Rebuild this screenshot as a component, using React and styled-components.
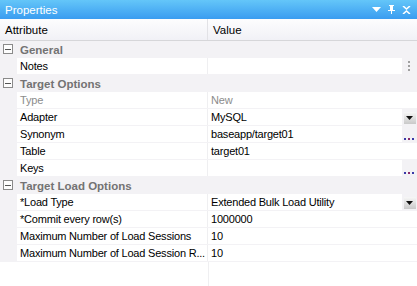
import React from "react";
import styled, { createGlobalStyle } from "styled-components";

const Global = createGlobalStyle`
  html, body { margin: 0; padding: 0; background: #fff; }
  body { font-family: "Liberation Sans", Arial, sans-serif; font-size: 11px; }
`;

const Panel = styled.div`
  width: 417px;
  height: 286px;
  display: flex;
  flex-direction: column;
  background: #fff;
  overflow: hidden;
`;

const TitleBar = styled.div`
  height: 19px;
  flex: none;
  display: flex;
  align-items: center;
  justify-content: space-between;
  padding: 0 6px 0 5px;
  background: linear-gradient(#64c6f9, #3a9cf0);
  color: #fff;
  font-size: 11.5px;
`;

const TitleIcons = styled.div`
  display: flex;
  align-items: center;
  gap: 6px;
`;

const Header = styled.div`
  height: 21px;
  flex: none;
  display: flex;
  align-items: center;
  background: linear-gradient(#fdfdfe, #f1f1f6);
  border-bottom: 1px solid #d6d6d9;
  color: #000;
  font-size: 11.5px;
`;

const HeadCell = styled.div`
  width: ${(p) => p.$w || "auto"};
  flex: ${(p) => (p.$w ? "none" : "1")};
  height: 100%;
  display: flex;
  align-items: center;
  padding-left: 5px;
  box-sizing: border-box;
  border-right: ${(p) => (p.$sep ? "1px solid #e2e2e6" : "none")};
`;

const Body = styled.div`
  flex: 1;
  display: flex;
  flex-direction: column;
  background: linear-gradient(to right, transparent 208px, #efeff1 208px, #efeff1 209px, transparent 209px);
`;

const GroupRow = styled.div`
  height: 17px;
  display: flex;
  align-items: center;
  background: #f3f2f5;
  color: #737373;
  font-weight: bold;
  font-size: 11.5px;
`;

const Toggle = styled.div`
  width: 17px;
  flex: none;
  display: flex;
  align-items: center;
  justify-content: center;
  margin-right: 3px;
`;

const Row = styled.div`
  height: 17px;
  display: flex;
  background: #f3f2f5;
  font-size: 11px;
  letter-spacing: -0.2px;
`;

const Gutter = styled.div`
  width: 17px;
  flex: none;
`;

const Cell = styled.div`
  height: 16px;
  background: #fff;
  display: flex;
  align-items: center;
  box-sizing: border-box;
  padding-left: 3px;
  color: ${(p) => (p.$ro ? "#8c8c8c" : "#000")};
  white-space: nowrap;
  overflow: hidden;
`;

const AttrCell = styled(Cell)`
  width: 190px;
  flex: none;
`;

const Divider = styled.div`
  width: 1px;
  flex: none;
  height: 16px;
  background: #efeff1;
`;

const ValueCell = styled(Cell)`
  flex: 1;
`;

const Side = styled.div`
  width: 15px;
  flex: none;
  height: 16px;
  display: flex;
  align-items: ${(p) => p.$align || "center"};
  justify-content: center;
  padding-bottom: ${(p) => (p.$align === "flex-end" ? "2px" : "0")};
  box-sizing: border-box;
  background: ${(p) => (p.$white ? "#fff" : "transparent")};
`;

const DropBtn = styled.div`
  width: 12px;
  height: 12px;
  margin-top: 1px;
  background: linear-gradient(#f7f7f7, #c9c9c9);
  display: flex;
  align-items: center;
  justify-content: center;
`;

const Minus = () => (
  <svg width="11" height="11" viewBox="0 0 11 11">
    <rect x="0.5" y="0.5" width="9" height="9" fill="#fdfdfd" stroke="#8a8a8a" />
    <rect x="2" y="5" width="6" height="1" fill="#555" />
  </svg>
);

const Tri = () => (
  <svg width="7" height="4" viewBox="0 0 7 4">
    <path d="M0 0h7L3.5 4z" fill="#111" />
  </svg>
);

const HDots = () => (
  <svg width="11" height="2" viewBox="0 0 11 2">
    <rect x="0" y="0" width="2" height="2" fill="#3a3aa8" />
    <rect x="4" y="0" width="2" height="2" fill="#8a2a6a" />
    <rect x="8" y="0" width="2" height="2" fill="#3a3aa8" />
  </svg>
);

const VDots = () => (
  <svg width="3" height="11" viewBox="0 0 3 11">
    <rect x="0" y="0" width="2" height="2" fill="#a0a0a0" />
    <rect x="0" y="4" width="2" height="2" fill="#a0a0a0" />
    <rect x="0" y="8" width="2" height="2" fill="#a0a0a0" />
  </svg>
);

const Group = ({ title }) => (
  <GroupRow>
    <Toggle>
      <Minus />
    </Toggle>
    {title}
  </GroupRow>
);

const Prop = ({ name, value, ro, btn }) => (
  <Row>
    <Gutter />
    <AttrCell $ro={ro}>{name}</AttrCell>
    <Divider />
    <ValueCell $ro={ro}>{value}</ValueCell>
    {btn === "drop" ? (
      <Side>
        <DropBtn>
          <Tri />
        </DropBtn>
      </Side>
    ) : btn === "dots" ? (
      <Side $align="flex-end">
        <HDots />
      </Side>
    ) : btn === "vdots" ? (
      <Side>
        <VDots />
      </Side>
    ) : (
      <Side $white />
    )}
  </Row>
);

export default function App() {
  return (
    <>
      <Global />
      <Panel>
        <TitleBar>
          <span>Properties</span>
          <TitleIcons>
            <svg width="9" height="5" viewBox="0 0 9 5">
              <path d="M0 0h9L4.5 5z" fill="#fff" />
            </svg>
            <svg width="9" height="9" viewBox="0 0 9 9">
              <path d="M2 0h5v1H6v4h2v1H5v3H4V6H1V5h2V1H2z" fill="#fff" />
            </svg>
            <svg width="9" height="8" viewBox="0 0 9 8">
              <path d="M1 0l3.5 3L8 0M1 8l3.5-3L8 8" stroke="#fff" strokeWidth="1.6" fill="none" />
            </svg>
          </TitleIcons>
        </TitleBar>
        <Header>
          <HeadCell $w="208px" $sep>Attribute</HeadCell>
          <HeadCell>Value</HeadCell>
        </Header>
        <Body>
          <Group title="General" />
          <Prop name="Notes" value="" btn="vdots" />
          <Group title="Target Options" />
          <Prop name="Type" value="New" ro />
          <Prop name="Adapter" value="MySQL" btn="drop" />
          <Prop name="Synonym" value="baseapp/target01" btn="dots" />
          <Prop name="Table" value="target01" />
          <Prop name="Keys" value="" btn="dots" />
          <Group title="Target Load Options" />
          <Prop name="*Load Type" value="Extended Bulk Load Utility" btn="drop" />
          <Prop name="*Commit every row(s)" value="1000000" />
          <Prop name="Maximum Number of Load Sessions" value="10" />
          <Prop name="Maximum Number of Load Session R..." value="10" />
        </Body>
      </Panel>
    </>
  );
}
